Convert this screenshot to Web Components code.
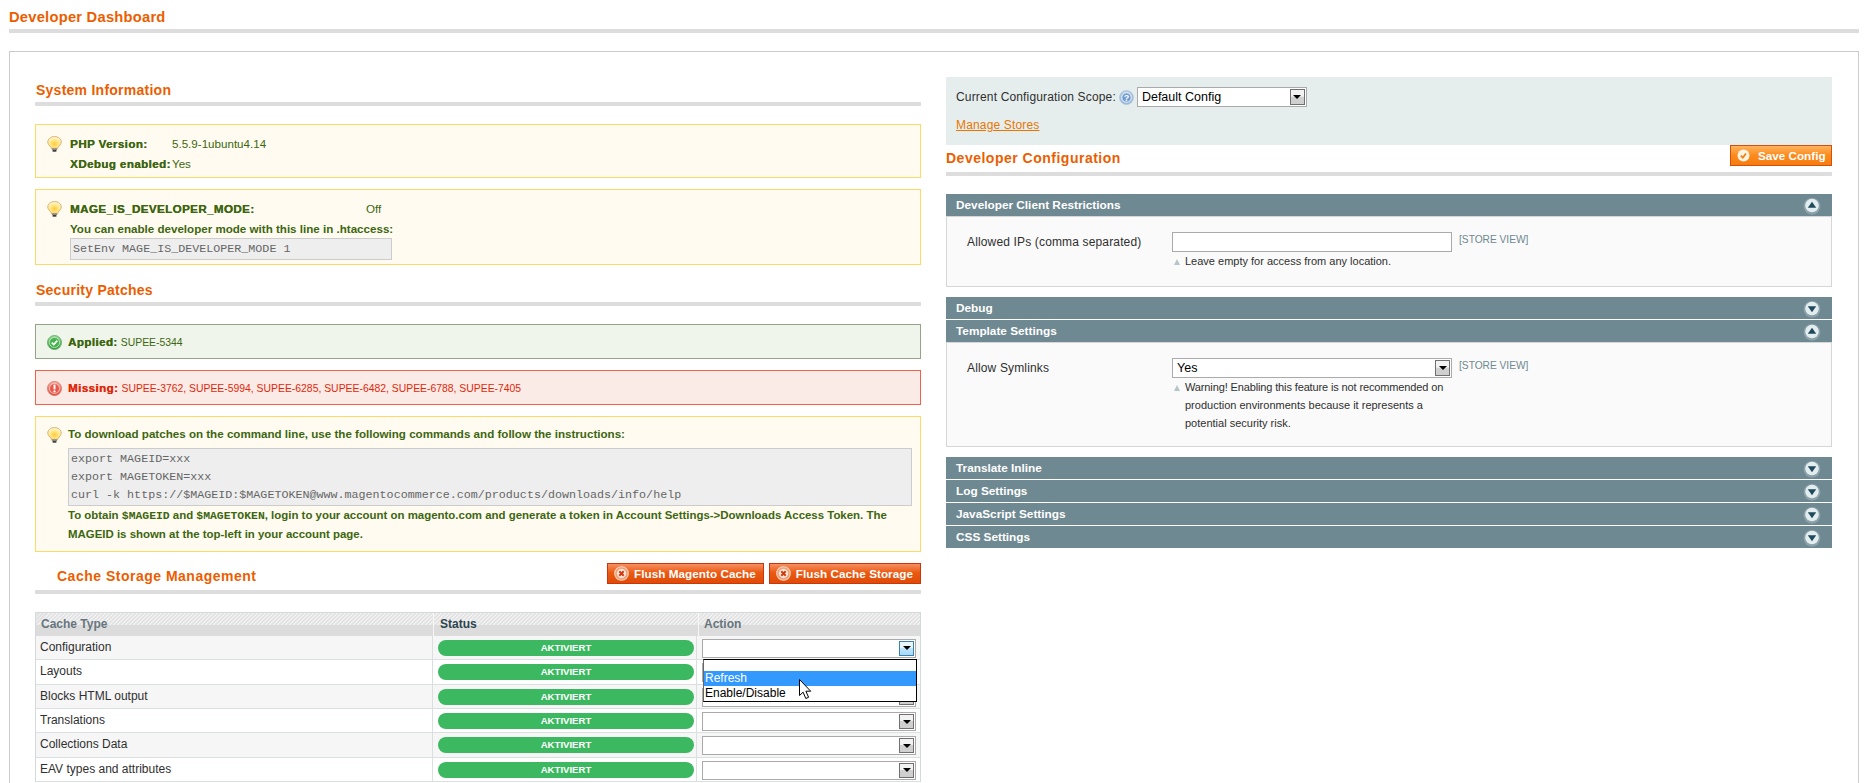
<!DOCTYPE html>
<html>
<head>
<meta charset="utf-8">
<title>Developer Dashboard</title>
<style>
  html, body { margin: 0; height: 783px; overflow: hidden; background: #fff; }
  body { font: 12px/18px "Liberation Sans", Arial, sans-serif; color: #2f2f2f; }
  dev-heading.page { margin: 7px 9px 18px 9px; }
  .box { box-sizing: border-box; margin: 0 9px; height: 732px; border: 1px solid #ccc; border-bottom: 0; padding: 25px 25px 0; display: grid; grid-template-columns: 886px 886px; column-gap: 25px; }
  .left { padding-top: 3px; }
  dev-heading.first { margin-bottom: 18px; }
  dev-notice { margin-bottom: 11px; }
  .k { font-weight: bold; letter-spacing: .4px; text-shadow: .3px 0 0 currentColor; }
  .v { font-weight: normal; }
  .p { font-weight: normal; font-size: 10.4px; line-height: 1; }
  .kv { display: grid; }
  .obtain { font-size: 11.45px; line-height: 19px; white-space: nowrap; }
  .tight { letter-spacing: -.13px; }
  code { font: bold 11.4px/1 "Liberation Mono", "Courier New", monospace; }
  dev-section.open + dev-section { margin-top: 10px; }
  dev-section + dev-section { margin-top: 1px; }
  dev-cache-table { margin-top: 18px; }
</style>
</head>
<body>

<dev-heading class="page" big>Developer Dashboard</dev-heading>

<div class="box">
  <div class="left">
    <dev-heading class="first">System Information</dev-heading>

    <dev-notice kind="info" gap="8" pad="9 3" lh="20">
      <div class="kv" style="grid-template-columns:102px 1fr">
        <span class="k">PHP Version:</span><span class="v">5.5.9-1ubuntu4.14</span>
        <span class="k">XDebug enabled:</span><span class="v">Yes</span>
      </div>
    </dev-notice>

    <dev-notice kind="info" gap="8" pad="9 4" lh="20">
      <div class="kv" style="grid-template-columns:296px 1fr">
        <span class="k">MAGE_IS_DEVELOPER_MODE:</span><span class="v">Off</span>
      </div>
      You can enable developer mode with this line in .htaccess:
      <dev-code style="width:322px;margin-top:-1px">SetEnv MAGE_IS_DEVELOPER_MODE 1</dev-code>
    </dev-notice>

    <dev-heading class="first" style="margin-top:15px">Security Patches</dev-heading>

    <dev-notice kind="success" gap="6" pad="8 7" lh="18">
      <span class="k">Applied:</span> <span class="p">SUPEE-5344</span>
    </dev-notice>

    <dev-notice kind="error" gap="6" pad="8 7" lh="18">
      <span class="k">Missing:</span> <span class="p">SUPEE-3762, SUPEE-5994, SUPEE-6285, SUPEE-6482, SUPEE-6788, SUPEE-7405</span>
    </dev-notice>

    <dev-notice kind="info" gap="6" pad="8 7" lh="18">
      To download patches on the command line, use the following commands and follow the instructions:
      <dev-code style="margin:5px 0 0;width:844px">export MAGEID=xxx
export MAGETOKEN=xxx
curl -k https://$MAGEID:$MAGETOKEN@www.magentocommerce.com/products/downloads/info/help</dev-code>
      <div class="obtain">To obtain <code>$MAGEID</code> and <code>$MAGETOKEN</code>, login to your account on magento.com and generate a token in Account Settings-&gt;Downloads Access Token. The<br>MAGEID is shown at the top-left in your account page.</div>
    </dev-notice>

    <dev-heading tall indent style="margin-top:11px">
      Cache Storage Management
      <dev-button slot="actions" icon="cross" tone="red">Flush Magento Cache</dev-button>
      <dev-button slot="actions" icon="cross" tone="red">Flush Cache Storage</dev-button>
    </dev-heading>

    <dev-cache-table>
      <dev-cache-row name="Configuration" open></dev-cache-row>
      <dev-cache-row name="Layouts"></dev-cache-row>
      <dev-cache-row name="Blocks HTML output"></dev-cache-row>
      <dev-cache-row name="Translations"></dev-cache-row>
      <dev-cache-row name="Collections Data"></dev-cache-row>
      <dev-cache-row name="EAV types and attributes"></dev-cache-row>
    </dev-cache-table>
  </div>

  <div class="right">
    <dev-scope></dev-scope>

    <dev-heading tall flush style="margin-bottom:18px">
      Developer Configuration
      <dev-button slot="actions" icon="check" tone="orange" wide>Save Config</dev-button>
    </dev-heading>

    <dev-section class="open" title="Developer Client Restrictions" open>
      <dev-field label="Allowed IPs (comma separated)" style="margin-bottom:1px">
        <dev-input></dev-input>
        <span slot="note">Leave empty for access from any location.</span>
      </dev-field>
    </dev-section>
    <dev-section title="Debug"></dev-section>
    <dev-section class="open" title="Template Settings" open>
      <dev-field label="Allow Symlinks" style="margin-bottom:-1px">
        <dev-select value="Yes"></dev-select>
        <span slot="note"><span class="tight">Warning! Enabling this feature is not recommended on</span><br>production environments because it represents a<br>potential security risk.</span>
      </dev-field>
    </dev-section>
    <dev-section title="Translate Inline"></dev-section>
    <dev-section title="Log Settings"></dev-section>
    <dev-section title="JavaScript Settings"></dev-section>
    <dev-section title="CSS Settings"></dev-section>
  </div>
</div>

<script>
const ICONS = {
  bulb: `<svg width="15" height="16" viewBox="0 0 15 16">
    <defs><radialGradient id="b" cx=".5" cy=".62" r=".6"><stop offset="0" stop-color="#ffc93a"/><stop offset=".5" stop-color="#ffe680"/><stop offset="1" stop-color="#fff8e0"/></radialGradient></defs>
    <path d="M7.500.6C3.600.6.8 3 .8 6c0 2.500 2 3.600 3 5.100.3.500.4 1 .4 1.200h6.600c0-.3.1-.8.4-1.200 1-1.500 3-2.600 3-5.100C14.200 3 11.400.6 7.500.6z" fill="url(#b)" stroke="#d8a860" stroke-width=".9"/>
    <path d="M4.800 12.300h5.400v1.700H4.800z" fill="#8a887e"/><path d="M5.600 14h3.800v1.700H5.600z" fill="#3c3c38"/></svg>`,
  success: `<svg width="15" height="15" viewBox="0 0 15 15">
    <defs><linearGradient id="g" x1="0" y1="0" x2="0" y2="1"><stop offset="0" stop-color="#a5dca0"/><stop offset="1" stop-color="#2f9e3c"/></linearGradient></defs>
    <circle cx="7.500" cy="7.500" r="7" fill="url(#g)" stroke="#5aa45c" stroke-width=".8"/>
    <circle cx="7.500" cy="7.500" r="5" fill="#46b24f" stroke="#c9eec5" stroke-width=".8"/>
    <path d="M4.800 7.600l2 2 3.500-4" fill="none" stroke="#fff" stroke-width="1.700"/></svg>`,
  error: `<svg width="15" height="15" viewBox="0 0 15 15">
    <defs><linearGradient id="r" x1="0" y1="0" x2="0" y2="1"><stop offset="0" stop-color="#f8b5a8"/><stop offset="1" stop-color="#e04a3c"/></linearGradient></defs>
    <circle cx="7.500" cy="7.500" r="7" fill="url(#r)" stroke="#d9695c" stroke-width=".8"/>
    <circle cx="7.500" cy="7.500" r="5" fill="#e9594b" stroke="#fbd3cb" stroke-width=".8"/>
    <path d="M6.500 3.600h2v4.800h-2z" fill="#fff"/><circle cx="7.500" cy="10.400" r="1.100" fill="#fff"/></svg>`,
  cross: `<svg width="15" height="15" viewBox="0 0 15 15">
    <circle cx="7.500" cy="7.500" r="6.800" fill="#f29a6e" stroke="#fbd5bf" stroke-width="1.100"/>
    <circle cx="7.500" cy="7.500" r="4.700" fill="#fde9dd"/>
    <path d="M5.300 5.300l4.400 4.400M9.700 5.300l-4.400 4.400" stroke="#d6390d" stroke-width="2"/></svg>`,
  check: `<svg width="13" height="13" viewBox="0 0 13 13">
    <circle cx="6.500" cy="6.500" r="6" fill="#fff3e2"/>
    <path d="M3.800 6.700l2 2 3.200-4.200" fill="none" stroke="#f0810f" stroke-width="1.800"/></svg>`,
  help: `<svg width="15" height="15" viewBox="0 0 15 15">
    <defs><radialGradient id="h" cx=".5" cy=".4" r=".6"><stop offset="0" stop-color="#e6f0fa"/><stop offset="1" stop-color="#8fb2d8"/></radialGradient></defs>
    <circle cx="7.500" cy="7.500" r="6.900" fill="url(#h)" stroke="#a9c0d8" stroke-width=".8"/>
    <circle cx="7.500" cy="7.500" r="4.700" fill="#6f9bcf" stroke="#fff" stroke-width=".8"/>
    <text x="7.500" y="10.600" text-anchor="middle" font-family="Liberation Sans" font-weight="bold" font-size="9" fill="#fff">?</text></svg>`
};

class DevIcon extends HTMLElement {
  connectedCallback() {
    if (this.shadowRoot) return;
    this.attachShadow({ mode: "open" }).innerHTML = `
      <style>:host { display: inline-flex; flex: none; line-height: 0; }</style>
      ${ICONS[this.getAttribute("name")] || ""}`;
  }
}

class DevHeading extends HTMLElement {
  constructor() {
    super();
    this.attachShadow({ mode: "open" }).innerHTML = `
      <style>
        :host { display: flex; justify-content: space-between; align-items: flex-start; border-bottom: 4px solid #ddd; padding-bottom: 2px; }
        :host([tall]) { padding-bottom: 6px; }
        .t { font: bold 14px/20px "Liberation Sans", Arial, sans-serif; color: #eb5e00; letter-spacing: .25px; padding-left: 1px; }
        :host([big]) .t { font-size: 14.7px; padding-left: 0; }
        :host([tall]) .t { padding-top: 3px; margin-bottom: -2px; letter-spacing: .5px; }
        :host([indent]) .t { padding-left: 22px; }
        :host([flush]) .t { padding-left: 0; }
        .a { display: flex; gap: 5px; }
      </style>
      <div class="t"><slot></slot></div>
      <div class="a"><slot name="actions"></slot></div>`;
  }
}

class DevNotice extends HTMLElement {
  connectedCallback() {
    if (this.shadowRoot) return;
    const kind = this.getAttribute("kind");
    const [top, bottom] = (this.getAttribute("pad") || "8 7").split(" ");
    const icon = kind === "info" ? "bulb" : kind;
    this.attachShadow({ mode: "open" }).innerHTML = `
      <style>
        :host { display: flex; gap: ${this.getAttribute("gap")}px; padding: ${top}px 8px ${bottom}px 11px; border: 1px solid; font: bold 11.6px/${this.getAttribute("lh")}px "Liberation Sans", Arial, sans-serif; }
        :host([kind=info]) { background: #fffbf0; border-color: #ffd967; color: #3d6611; }
        :host([kind=success]) { background: #eff5ea; border-color: #95a486; color: #3d6611; }
        :host([kind=error]) { background: #faebe7; border-color: #f16048; color: #df280a; }
        .i { margin-top: 2px; height: 16px; }
        .c { flex: 1; min-width: 0; }
      </style>
      <dev-icon class="i" name="${icon}"></dev-icon>
      <div class="c"><slot></slot></div>`;
  }
}

class DevCode extends HTMLElement {
  constructor() {
    super();
    this.attachShadow({ mode: "open" }).innerHTML = `
      <style>
        :host { display: block; box-sizing: border-box; background: #eee; border: 1px solid #ccc; padding: 1px 2px; font: 11.7px/18px "Liberation Mono", "Courier New", monospace; color: #666; }
        pre { margin: 0; font: inherit; }
      </style>
      <pre><slot></slot></pre>`;
  }
}

class DevButton extends HTMLElement {
  connectedCallback() {
    if (this.shadowRoot) return;
    this.attachShadow({ mode: "open" }).innerHTML = `
      <style>
        :host { display: inline-flex; align-items: center; box-sizing: border-box; height: 21px; border: 1px solid; font: bold 11.7px/18px "Liberation Sans", Arial, sans-serif; color: #fff; white-space: nowrap; padding: 0 7px 0 6px; gap: 5px; letter-spacing: .05px; }
        :host([tone=red]) { background: linear-gradient(#f79063, #ea5a12 45%, #e04b08); border-color: #c9360a; }
        :host([tone=orange]) { background: linear-gradient(#ffb360, #fb8a1c 50%, #f77c10); border-color: #d2500a; }
        :host([wide]) { width: 102px; gap: 8px; letter-spacing: 0; }
      </style>
      <dev-icon name="${this.getAttribute("icon")}"></dev-icon><slot></slot>`;
  }
}

class DevSelect extends HTMLElement {
  connectedCallback() {
    if (this.shadowRoot) return;
    const open = this.hasAttribute("open");
    this.attachShadow({ mode: "open" }).innerHTML = `
      <style>
        :host { display: block; position: relative; box-sizing: border-box; height: 20px; background: #fff; border: 1px solid #aaa; font: 12.5px/18px "Liberation Sans", Arial, sans-serif; color: #000; }
        .v { padding-left: 4px; }
        .b { position: absolute; top: 1px; right: 1px; bottom: 1px; width: 15px; box-sizing: border-box; border: 1px solid #707070; background: linear-gradient(#f2f2f2 45%, #d0d0d0 50%, #cfcfcf); display: flex; align-items: center; justify-content: center; }
        .b i { width: 0; height: 0; border: 4px solid transparent; border-top-color: #000; border-bottom: 0; }
        :host([open]) .b { border-color: #3c7fb1; background: linear-gradient(#eaf6fd 45%, #bee6fd 50%, #a7d9f5); }
        .pop { position: absolute; z-index: 10; left: 0; right: -2px; top: 19px; border: 1px solid #000; border-left-color: #666; background: #fff; font-size: 12px; line-height: 15px; }
        .pop div { height: 15px; padding-left: 1px; }
        .pop .e { height: 11px; }
        .pop .s { background: #39f; color: #fff; }
      </style>
      <div class="v">${this.getAttribute("value") || ""}</div>
      <div class="b"><i></i></div>
      ${open ? `<div class="pop"><div class="e"></div><div class="s">Refresh</div><div>Enable/Disable</div></div>
      <svg style="position:absolute;z-index:11;left:96px;top:39px" width="13" height="22" viewBox="0 0 13 22"><path d="M.5.5v16l3.600-3.300 2.700 6.300 2.800-1.200-2.700-6.100h4.800z" fill="#fff" stroke="#000"/></svg>` : ""}`;
  }
}

class DevInput extends HTMLElement {
  constructor() {
    super();
    this.attachShadow({ mode: "open" }).innerHTML = `
      <style>:host { display: block; box-sizing: border-box; height: 20px; background: #fff; border: 1px solid #aaa; }</style>`;
  }
}

class DevCacheTable extends HTMLElement {
  constructor() {
    super();
    this.attachShadow({ mode: "open" }).innerHTML = `
      <style>
        :host { display: block; border: 1px solid #d4d9d9; border-width: 1px 1px 0; }
        .h { display: grid; grid-template-columns: 397px 1px 264px 1px 1fr; height: 22.900px; font: bold 12px/23px "Liberation Sans", Arial, sans-serif; color: #67767e; background: repeating-linear-gradient(135deg, #f0f0f0 0 1.410px, #e2e2e2 1.410px 2.830px) top / 100% 12px no-repeat, #dcdcdc; }
        .h span { padding-left: 5px; }
        .h i { background: #f6f6f6; }
        .h .d { color: #2d444f; padding-left: 6px; }
      </style>
      <div class="h"><span>Cache Type</span><i></i><span class="d">Status</span><i></i><span>Action</span></div>
      <slot></slot>`;
  }
}

class DevCacheRow extends HTMLElement {
  connectedCallback() {
    if (this.shadowRoot) return;
    this.attachShadow({ mode: "open" }).innerHTML = `
      <style>
        :host { display: grid; grid-template-columns: 397px 264px 1fr; box-sizing: border-box; height: 24.400px; background: #fff; border-bottom: 1px solid #dadfe0; font: 12px/23px "Liberation Sans", Arial, sans-serif; }
        :host(:nth-of-type(odd)) { background: #f6f6f6; }
        .c { box-sizing: border-box; border-right: 1px solid #dadfe0; padding: 0 4px; }
        .p { margin: 4px 2px 0 5px; height: 16px; border-radius: 8px; background: #3cb861; color: #fff; text-align: center; font: bold 9.600px/16px "Liberation Sans", Arial, sans-serif; }
        .s { padding: 3px 4px 0 5px; }
        dev-select { height: 19px; }
      </style>
      <div class="c">${this.getAttribute("name")}</div>
      <div class="c" style="padding:0"><div class="p">AKTIVIERT</div></div>
      <div class="s"><dev-select ${this.hasAttribute("open") ? "open" : ""}></dev-select></div>`;
  }
}

class DevScope extends HTMLElement {
  constructor() {
    super();
    this.attachShadow({ mode: "open" }).innerHTML = `
      <style>
        :host { display: block; box-sizing: border-box; height: 68px; background: #e6eeed; padding: 10px 10px 0; font: 12px/18px "Liberation Sans", Arial, sans-serif; letter-spacing: .16px; }
        .r { display: flex; align-items: center; height: 20px; }
        dev-icon { margin: 0 3px; }
        dev-select { width: 170px; letter-spacing: 0; }
        a { display: inline-block; margin-top: 9px; color: #ea7601; text-decoration: underline; }
      </style>
      <div class="r">Current Configuration Scope:<dev-icon name="help"></dev-icon><dev-select value="Default Config"></dev-select></div>
      <a href="#">Manage Stores</a>`;
  }
}

class DevSection extends HTMLElement {
  connectedCallback() {
    if (this.shadowRoot) return;
    const open = this.hasAttribute("open");
    this.attachShadow({ mode: "open" }).innerHTML = `
      <style>
        :host { display: block; }
        .h { display: flex; justify-content: space-between; align-items: center; height: 22px; background: #6f8992; color: #fff; font: bold 11.800px/22px "Liberation Sans", Arial, sans-serif; padding: 0 10px; }
        .c { box-sizing: border-box; border: 1px solid #d6d6d6; background: #fafafa; padding: 15px 20px; }
        svg { display: block; margin-top: 1px; }
      </style>
      <div class="h"><span>${this.getAttribute("title")}</span>
        <svg width="20" height="20" viewBox="0 0 20 20">
          <circle cx="10" cy="10.300" r="8.400" fill="#8ba2aa"/>
          <circle cx="10" cy="9.500" r="6.800" fill="#e3edf0"/>
          <path d="${open ? "M10 5.800l4.200 6h-8.400z" : "M5.800 7.200h8.400l-4.200 6z"}" fill="#1f4a5b"/>
        </svg>
      </div>
      ${open ? `<div class="c"><slot></slot></div>` : ""}`;
  }
}

class DevField extends HTMLElement {
  connectedCallback() {
    if (this.shadowRoot) return;
    this.attachShadow({ mode: "open" }).innerHTML = `
      <style>
        :host { display: grid; grid-template-columns: 205px 280px 1fr; font: 12px/18px "Liberation Sans", Arial, sans-serif; }
        .l { padding-top: 1px; letter-spacing: .15px; }
        .s { padding-left: 7px; font-size: 10.200px; line-height: 15px; color: #6f8992; }
        .n { grid-column: 2; display: flex; font-size: 11px; line-height: 18px; }
        .n i { flex: none; width: 0; height: 0; margin: 7px 5px 0 2px; border: 3.500px solid transparent; border-top: 0; border-bottom: 6px solid #b5c5ca; }
        ::slotted([slot=note]) { white-space: nowrap; }
      </style>
      <div class="l">${this.getAttribute("label")}</div>
      <div><slot></slot></div>
      <div class="s">[STORE VIEW]</div>
      <div class="n"><i></i><div><slot name="note"></slot></div></div>`;
  }
}

customElements.define("dev-icon", DevIcon);
customElements.define("dev-heading", DevHeading);
customElements.define("dev-notice", DevNotice);
customElements.define("dev-code", DevCode);
customElements.define("dev-button", DevButton);
customElements.define("dev-select", DevSelect);
customElements.define("dev-input", DevInput);
customElements.define("dev-cache-table", DevCacheTable);
customElements.define("dev-cache-row", DevCacheRow);
customElements.define("dev-scope", DevScope);
customElements.define("dev-section", DevSection);
customElements.define("dev-field", DevField);
</script>
</body>
</html>
